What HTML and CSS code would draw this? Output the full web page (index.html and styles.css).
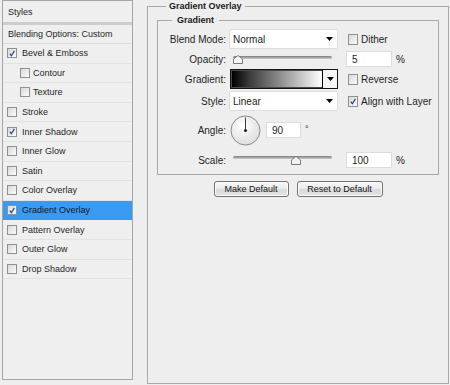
FILE: index.html
```html
<!DOCTYPE html>
<html>
<head>
<meta charset="utf-8">
<title>Layer Style - Gradient Overlay</title>
<link rel="stylesheet" href="styles.css">
</head>
<body>
<div class="dialog">
  <aside class="styles-panel">
    <div class="sp-head">Styles</div>
    <div class="sp-blend">Blending Options: Custom</div>
    <ul class="sp-list">
      <li class="sp-item"><span class="cb on"><svg viewBox="0 0 10 10"><path d="M2.2 5.2 L4.2 7.8 L8 1.8"/></svg></span>Bevel &amp; Emboss</li>
      <li class="sp-item sub"><span class="cb"></span>Contour</li>
      <li class="sp-item sub"><span class="cb"></span>Texture</li>
      <li class="sp-item"><span class="cb"></span>Stroke</li>
      <li class="sp-item"><span class="cb on"><svg viewBox="0 0 10 10"><path d="M2.2 5.2 L4.2 7.8 L8 1.8"/></svg></span>Inner Shadow</li>
      <li class="sp-item"><span class="cb"></span>Inner Glow</li>
      <li class="sp-item"><span class="cb"></span>Satin</li>
      <li class="sp-item"><span class="cb"></span>Color Overlay</li>
      <li class="sp-item active"><span class="cb on"><svg viewBox="0 0 10 10"><path d="M2.2 5.2 L4.2 7.8 L8 1.8"/></svg></span>Gradient Overlay</li>
      <li class="sp-item"><span class="cb"></span>Pattern Overlay</li>
      <li class="sp-item"><span class="cb"></span>Outer Glow</li>
      <li class="sp-item"><span class="cb"></span>Drop Shadow</li>
    </ul>
  </aside>

  <fieldset class="fx">
    <legend>Gradient Overlay</legend>
    <fieldset class="grp">
      <legend>Gradient</legend>

      <div class="row r1">
        <label class="lbl">Blend Mode:</label>
        <div class="select"><span>Normal</span><svg class="arrow" viewBox="0 0 7 4"><path d="M0 0 H7 L3.5 4 Z"/></svg></div>
        <span class="chk"><span class="cb"></span>Dither</span>
      </div>

      <div class="row r2">
        <label class="lbl">Opacity:</label>
        <div class="slider">
          <span class="track"></span>
          <svg class="thumb t-op" viewBox="0 0 10 9"><path d="M0.5 4 L5 0.5 L9.5 4 V8.5 H0.5 Z"/></svg>
        </div>
        <input class="num" type="text" value="5">
        <span class="unit">%</span>
      </div>

      <div class="row r3">
        <label class="lbl">Gradient:</label>
        <div class="grad">
          <span class="grad-fill"></span>
          <span class="grad-btn"><svg class="arrow" viewBox="0 0 7 4"><path d="M0 0 H7 L3.5 4 Z"/></svg></span>
        </div>
        <span class="chk"><span class="cb"></span>Reverse</span>
      </div>

      <div class="row r4">
        <label class="lbl">Style:</label>
        <div class="select"><span>Linear</span><svg class="arrow" viewBox="0 0 7 4"><path d="M0 0 H7 L3.5 4 Z"/></svg></div>
        <span class="chk"><span class="cb on"><svg viewBox="0 0 10 10"><path d="M2.2 5.2 L4.2 7.8 L8 1.8"/></svg></span>Align with Layer</span>
      </div>

      <div class="row r5">
        <label class="lbl">Angle:</label>
        <svg class="dial" viewBox="0 0 31 31">
          <defs>
            <radialGradient id="dg" cx="40%" cy="35%" r="75%">
              <stop offset="0" stop-color="#ffffff"/>
              <stop offset="1" stop-color="#dadada"/>
            </radialGradient>
          </defs>
          <circle cx="15.5" cy="15.5" r="14.5" fill="url(#dg)" stroke="#8a8a8a"/>
          <line x1="15.5" y1="15.5" x2="15.5" y2="2.5" stroke="#3a3a3a" stroke-width="1"/>
          <circle cx="15.5" cy="15.5" r="1.6" fill="#222"/>
        </svg>
        <input class="num angle" type="text" value="90">
        <span class="deg">°</span>
      </div>

      <div class="row r6">
        <label class="lbl">Scale:</label>
        <div class="slider">
          <span class="track"></span>
          <svg class="thumb t-sc" viewBox="0 0 10 9"><path d="M0.5 4 L5 0.5 L9.5 4 V8.5 H0.5 Z"/></svg>
        </div>
        <input class="num" type="text" value="100">
        <span class="unit">%</span>
      </div>
    </fieldset>

    <div class="buttons">
      <button class="btn b-make">Make Default</button>
      <button class="btn b-reset">Reset to Default</button>
    </div>
  </fieldset>
</div>
</body>
</html>
```

FILE: styles.css
```css
* { box-sizing: border-box; }

html, body {
  margin: 0;
  background: #eeeeee;
}

body {
  width: 450px;
  height: 385px;
  overflow: hidden;
  font-family: "Liberation Sans", Arial, sans-serif;
  color: #1e1e1e;
}

.dialog {
  display: flex;
  gap: 14px;
  padding-left: 2px;
}

/* ---------- left styles list ---------- */
.styles-panel {
  width: 131px;
  height: 380px;
  border: 1px solid #a6a6a6;
  background: #efefef;
  font-size: 9px;
  color: #262626;
}

.sp-head {
  height: 24px;
  line-height: 23px;
  padding-left: 5px;
  border-bottom: 3px solid #cdcdcd;
}

.sp-blend {
  height: 19px;
  line-height: 18px;
  padding-left: 5px;
  border-bottom: 1px solid #dadada;
}

.sp-list {
  list-style: none;
  margin: 0;
  padding: 0;
}

.sp-item {
  height: 19.6px;
  display: flex;
  align-items: center;
  padding-left: 4px;
  border-bottom: 1px solid #e3e3e3;
}

.sp-item.sub { padding-left: 17px; }

.sp-item.active {
  background: #3a9af2;
  border-bottom-color: #3a9af2;
  color: #101828;
}

.cb {
  flex: none;
  width: 10px;
  height: 10px;
  margin-right: 5px;
  border: 1px solid #8f9090;
  background: linear-gradient(135deg, #d9d9d9, #fbfbfb);
  display: inline-flex;
  align-items: center;
  justify-content: center;
}

.sp-item.sub .cb { margin-right: 3px; }

.cb svg {
  width: 9px;
  height: 9px;
  fill: none;
  stroke: #22449e;
  stroke-width: 1.5;
}

/* ---------- right panel ---------- */
.fx {
  width: 302px;
  height: 384px;
  margin: 0;
  padding: 2px 9px 0 9px;
  border: 1px solid #a8a8a8;
  min-width: 0;
}

.fx > legend,
.grp > legend {
  font-size: 9px;
  font-weight: bold;
  line-height: 12px;
  color: #1a1a1a;
}

.fx > legend {
  padding: 0 3px;
  margin-left: 9px;
}

.grp {
  margin: 0;
  padding: 3px 0 5px 0;
  border: 1px solid #a8a8a8;
  min-width: 0;
}

.grp > legend {
  padding: 0 5px;
  margin-left: 14px;
}

.row {
  display: flex;
  align-items: center;
  height: 20px;
  font-size: 10px;
}

.r4 { margin-top: 2px; }
.r5 { margin-top: 3px; height: 32px; }
.r6 { margin-top: 5px; height: 18px; }

.lbl {
  width: 68px;
  text-align: right;
  flex: none;
  margin-right: 3px;
}

.select {
  width: 109px;
  height: 20px;
  background: #ffffff;
  border: 1px solid #dddddd;
  border-radius: 2px;
  display: flex;
  align-items: center;
  justify-content: space-between;
  padding: 0 4px 0 3px;
}

.arrow {
  width: 7px;
  height: 4px;
  fill: #000;
}

.chk {
  display: flex;
  align-items: center;
  margin-left: 10px;
}

.chk .cb { margin-right: 3px; width: 10px; height: 11px; }

/* sliders */
.slider {
  width: 109px;
  height: 20px;
  position: relative;
}

.r6 .slider { height: 18px; }

.track {
  display: block;
  height: 3px;
  margin: 7px 6px 0 4px;
  border-radius: 2px;
  background: linear-gradient(#7b7b7b, #cfcfcf);
  border: 0;
}

.r6 .track { margin-top: 5px; }

.thumb {
  position: absolute;
  width: 10px;
  height: 9px;
  fill: #f4f4f4;
  stroke: #7a7a7a;
  stroke-width: 1;
}

.t-op { left: 4px; top: 6px; }
.t-sc { left: 62px; top: 5px; }

.num {
  width: 46px;
  height: 16px;
  margin: 0 0 0 8px;
  padding: 0 0 0 5px;
  border: 1px solid #dcdcdc;
  background: #fff;
  font-family: "Liberation Sans", Arial, sans-serif;
  font-size: 10px;
  color: #1e1e1e;
  outline: none;
}

.num.angle {
  width: 35px;
  margin-left: 5px;
}

.unit { margin-left: 4px; }

.deg {
  margin-left: 4px;
  align-self: flex-start;
  margin-top: 10px;
  font-size: 9px;
  color: #222;
}

/* gradient bar */
.grad {
  width: 108px;
  height: 20px;
  margin-left: 1px;
  display: flex;
  border: 1px solid #151515;
  background: #fff;
}

.grad-fill {
  flex: 1;
  border: 1px solid #4a4a4a;
  border-right: 0;
  background: linear-gradient(to right, #000000 0%, #3c3c3c 20%, #ffffff 100%);
}

.grad-btn {
  width: 15px;
  border-left: 1px solid #000;
  background: #f6f6f6;
  display: flex;
  align-items: center;
  justify-content: center;
}

.dial {
  width: 31px;
  height: 31px;
  margin-left: 1px;
  flex: none;
}

/* buttons */
.buttons {
  display: flex;
  justify-content: center;
  gap: 8px;
  margin-top: 6px;
}

.btn {
  height: 16px;
  padding: 0;
  border: 1px solid #727272;
  border-radius: 3px;
  background: linear-gradient(#fafafa, #e9e9e9 50%, #d9d9d9 51%, #e4e4e4);
  box-shadow: inset 0 0 0 1px #fbfbfb;
  font-family: "Liberation Sans", Arial, sans-serif;
  font-size: 9px;
  color: #111;
}

.b-make { width: 75px; }
.b-reset { width: 86px; }
```
